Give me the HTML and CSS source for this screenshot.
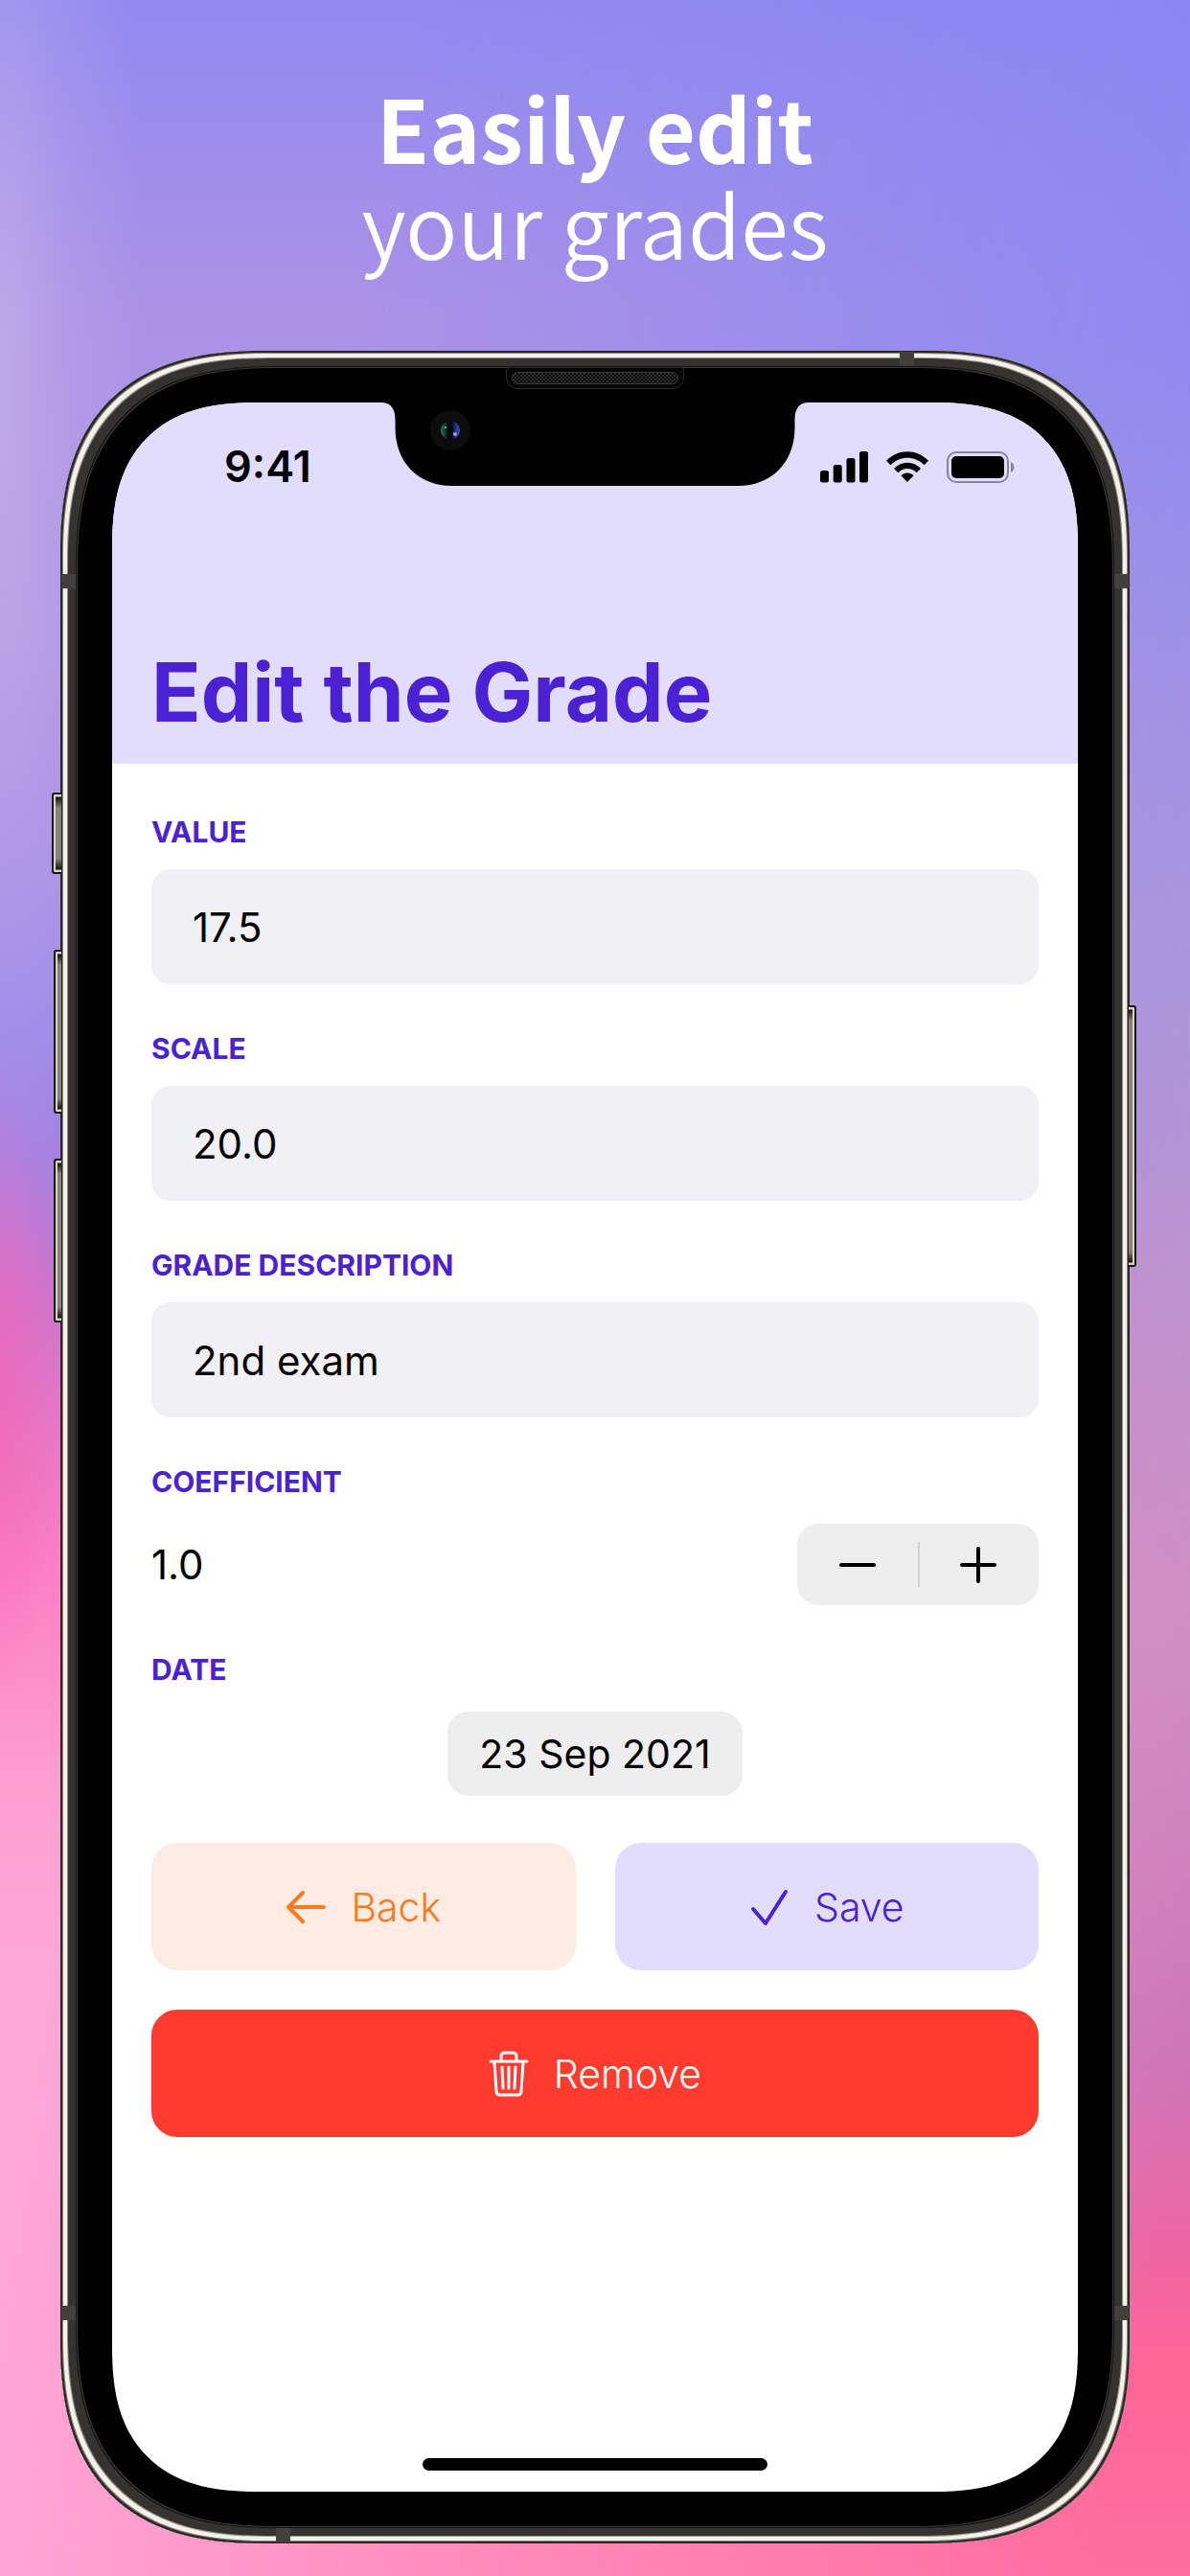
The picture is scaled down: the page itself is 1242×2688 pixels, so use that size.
FILE: index.html
```html
<!DOCTYPE html>
<html lang="en">
<head>
<meta charset="utf-8">
<meta name="viewport" content="width=device-width, initial-scale=1">
<title>Easily edit your grades</title>
<link rel="stylesheet" href="styles.css">
</head>
<body>
<main class="poster">
  <h1 class="headline"><strong>Easily edit</strong><br>your grades</h1>

  <div class="phone">
    <span class="key key-mute"></span>
    <span class="key key-up"></span>
    <span class="key key-down"></span>
    <span class="key key-power"></span>
    <span class="band band-top"></span>
    <span class="band band-bottom"></span>
    <span class="band band-side band-left band-high"></span>
    <span class="band band-side band-right band-high"></span>
    <span class="band band-side band-left band-low"></span>
    <span class="band band-side band-right band-low"></span>
    <span class="speaker"><span class="grille"></span></span>

    <div class="screen">
      <svg class="notch" viewBox="0 0 442 88" width="442" height="88" aria-hidden="true">
        <defs>
          <linearGradient id="lens" x1="0" x2="1" y1="0" y2="0">
            <stop offset="0" stop-color="#2c7a6c"/>
            <stop offset=".35" stop-color="#06100f"/>
            <stop offset=".55" stop-color="#020208"/>
            <stop offset=".8" stop-color="#1c3a9a"/>
            <stop offset="1" stop-color="#3c48b8"/>
          </linearGradient>
        </defs>
        <path d="M0 0C9 1 12.500 8 12.500 18V26C12.500 64 38 87 72 87H370C404 87 429.500 64 429.500 26V18C429.500 8 433 1 442 0Z" fill="#000"/>
        <circle cx="70" cy="29" r="21" fill="#0c0c0d"/>
        <circle cx="70" cy="29" r="10" fill="url(#lens)"/>
        <circle cx="75" cy="33" r="2" fill="#b08cc8"/>
        <circle cx="65" cy="26" r="1" fill="#7ad0d8"/>
      </svg>

      <header class="app-header">
        <div class="status">
          <span class="clock">9:41</span>
          <div class="status-icons">
            <svg width="50" height="33" viewBox="0 0 50 33" aria-hidden="true">
              <rect x="0" y="20" width="9" height="12.500" rx="2.500"/>
              <rect x="13.700" y="14" width="9" height="18.500" rx="2.500"/>
              <rect x="27.500" y="7" width="9" height="25.500" rx="2.500"/>
              <rect x="41" y="0" width="9" height="32.500" rx="2.500"/>
            </svg>
            <svg width="44" height="33" viewBox="0 0 44 33" aria-hidden="true">
              <path d="M0 9.800C12-3 32-3 44 9.800L39.600 14.200C30 4.200 14 4.200 4.400 14.200Z"/>
              <path d="M8 18C16 9.700 28 9.700 36 18L31.600 22.300C26 16.700 18 16.700 12.400 22.300Z"/>
              <path d="M15.400 25.300C19 21.700 25 21.700 28.600 25.300L22 32Z"/>
            </svg>
            <svg width="72" height="33" viewBox="0 0 72 33" aria-hidden="true">
              <rect x="1" y="1" width="63" height="31" rx="9" fill="none" stroke="#000" stroke-opacity=".4" stroke-width="2"/>
              <rect x="5" y="5" width="55" height="23" rx="5"/>
              <path d="M67 11C71.500 13 71.500 20 67 22Z" fill-opacity=".4"/>
            </svg>
          </div>
        </div>
        <h2 class="title">Edit the Grade</h2>
      </header>

      <form class="form">
        <div class="field">
          <label for="value">VALUE</label>
          <input id="value" type="text" inputmode="decimal" value="17.5">
        </div>
        <div class="field">
          <label for="scale">SCALE</label>
          <input id="scale" type="text" inputmode="decimal" value="20.0">
        </div>
        <div class="field">
          <label for="description">GRADE DESCRIPTION</label>
          <input id="description" type="text" value="2nd exam">
        </div>
        <div class="field field-loose">
          <label for="coefficient">COEFFICIENT</label>
          <div class="row">
            <output id="coefficient">1.0</output>
            <div class="stepper">
              <button type="button" aria-label="Decrease">
                <svg width="38" height="38" viewBox="0 0 38 38" aria-hidden="true"><path d="M2 19H36"/></svg>
              </button>
              <button type="button" aria-label="Increase">
                <svg width="38" height="38" viewBox="0 0 38 38" aria-hidden="true"><path d="M2 19H36M19 2V36"/></svg>
              </button>
            </div>
          </div>
        </div>
        <div class="field field-loose">
          <label for="date">DATE</label>
          <button class="date" id="date" type="button"><time datetime="2021-09-23">23 Sep 2021</time></button>
        </div>
        <div class="actions">
          <button class="action back" type="button">
            <svg width="42" height="48" viewBox="0 0 42 48" aria-hidden="true"><path d="M40 24H3M18 9L3 24L18 39"/></svg>
            Back
          </button>
          <button class="action save" type="submit">
            <svg width="42" height="48" viewBox="0 0 42 48" aria-hidden="true"><path d="M4 26L17 41L38 8"/></svg>
            Save
          </button>
          <button class="action remove" type="button">
            <svg width="42" height="48" viewBox="0 0 42 48" aria-hidden="true"><path d="M2 11H40M13 10V6Q13 2 17 2H25Q29 2 29 6V10M6 12L8 42Q8 46 12 46H30Q34 46 34 42L36 12M14 17L15 39M21 17V39M28 17L27 39"/></svg>
            Remove
          </button>
        </div>
      </form>
      <div class="home-bar"></div>
    </div>
  </div>
</main>
</body>
</html>
```
FILE: styles.css
```css
* { box-sizing: border-box; }

body {
  margin: 0;
  font-family: Inter, "Liberation Sans", sans-serif;
  color: #000;
}

button, input { font: inherit; color: inherit; border: 0; margin: 0; }
button { padding: 0; cursor: pointer; }

.poster {
  position: relative;
  isolation: isolate;
  min-height: 100vh;
  padding: 82px 63px 34px;
  background: linear-gradient(#8687f3 0%, #8887f3 13%, #9a90e8 25%, #ad99da 37%, #bd98cf 50%, #cd8fc5 63%, #ce75b8 80%, #f065a0 88%, #ff6698 92%, #ff6e9f 100%);
}

/* left-hand colours, fading out towards the right */
.poster::before,
.poster::after {
  content: "";
  position: absolute;
  inset: 0;
  z-index: -1;
}
.poster::before {
  background: linear-gradient(#9289f0 0%, #ab92e6 12%, #b095e4 25%, #a990e6 34%, #9c89ea 40%, #a57fe0 45%, #cd74cc 50%, #e878c4 56%, #fb80c4 61%, #fe9ed2 69%, #fda7d7 76%, #ffa8d8 100%);
  -webkit-mask-image: linear-gradient(100deg, #000 24%, rgba(0, 0, 0, .55) 54%, transparent 95%);
  mask-image: linear-gradient(100deg, #000 24%, rgba(0, 0, 0, .55) 54%, transparent 95%);
}
.poster::after {
  background: radial-gradient(ellipse 150px 1000px at 0 400px, rgba(200, 182, 234, .65), rgba(200, 182, 234, .2) 50%, transparent),
    radial-gradient(ellipse 60px 330px at 0 1450px, rgba(245, 100, 180, .6), transparent);
}

.headline {
  margin: 0 0 84px;
  font-family: "Noto Sans CJK SC", sans-serif;
  font-size: 90px;
  line-height: 100px;
  font-weight: 350;
  text-align: center;
  color: #fff;
}
.headline strong { font-weight: 700; }

.phone {
  position: relative;
  padding: 54px;
  border-radius: 176px;
  background: #000;
  box-shadow:
    inset 0 0 0 2px #2a2926,
    inset 0 0 0 3px #85837b,
    inset 0 0 0 7px #f5f0e9,
    inset 0 0 0 8px #96948a,
    inset 0 0 0 16px #34332f,
    inset 0 0 0 17px #121212,
    inset 0 0 0 18px #3a3a3c;
}
.screen {
  position: relative;
  overflow: hidden;
  padding-bottom: 22px;
  border-radius: 122px;
  background: #fff;
}
@supports (corner-shape: superellipse(1.33)) {
  .phone { border-radius: 215px; corner-shape: superellipse(1.33); }
  .screen { border-radius: 152px; corner-shape: superellipse(1.33); }
}

/* hardware details laid over the frame */
.key {
  position: absolute;
  left: -7px;
  width: 8px;
  height: 171px;
  border: 2px solid #151512;
  border-right: 0;
  border-radius: 3px 0 0 3px;
  background: linear-gradient(90deg, #d8d4c8 2px, transparent 2px), linear-gradient(#d8d4c8 2px, #151512 3px, #85837b 14px, #85837b calc(100% - 14px), #151512 calc(100% - 3px), #d8d4c8 calc(100% - 2px));
}
.key-mute { left: -9px; top: 461px; width: 10px; height: 85px; }
.key-up { top: 625px; }
.key-down { top: 843px; }
.key-power { left: auto; right: -7px; top: 683px; height: 273px; transform: scaleX(-1); }

.band { position: absolute; width: 15px; height: 15px; background: #443f3c; }
.band-top { left: 876px; top: 1px; }
.band-bottom { left: 225px; bottom: 1px; }
.band-left { left: 1px; }
.band-right { right: 1px; }
.band-high { top: 233px; }
.band-low { bottom: 233px; }

.speaker {
  position: absolute;
  left: 50%;
  top: 17px;
  width: 186px;
  height: 23px;
  padding: 4px 5px;
  transform: translateX(-50%);
  border: 1px solid #2a2a2b;
  border-radius: 3px 3px 12px 12px;
  background: #050505;
}
.grille {
  display: block;
  height: 13px;
  border: 1px solid #3a3a3a;
  border-radius: 7px;
  background: repeating-conic-gradient(#2c2c2c 0 25%, #0a0a0a 0 50%) 0 0 / 4px 4px;
}
.notch { position: absolute; left: 50%; top: 0; transform: translateX(-50%); }

.app-header {
  padding: 37px 41px 24px;
  background: #e2ddfd;
}
.status {
  display: flex;
  align-items: center;
  justify-content: space-between;
  height: 60px;
  margin-bottom: 156px;
  padding: 0 24px 0 76px;
}
.clock { font-size: 45px; line-height: 60px; font-weight: 600; }
.status-icons { display: flex; gap: 19px; }

.title {
  margin: 0;
  font-size: 85px;
  line-height: 100px;
  font-weight: 700;
  color: #4a22d4;
}

.form {
  display: flex;
  flex-direction: column;
  gap: 49px;
  padding: 53px 41px 0;
}
.field { display: flex; flex-direction: column; gap: 21px; }
.field-loose { gap: 26px; }
.field label {
  font-size: 30px;
  line-height: 36px;
  font-weight: 700;
  color: #4a22d4;
}
.field input {
  width: 100%;
  height: 120px;
  padding: 0 43px;
  border-radius: 20px;
  background: #f1f0f5;
  font-size: 42px;
}
.row {
  display: flex;
  align-items: center;
  justify-content: space-between;
  font-size: 42px;
}
.stepper {
  display: flex;
  width: 252px;
  height: 85px;
  border-radius: 22px;
  background: #eeeeef;
}
.stepper button {
  position: relative;
  flex: 1;
  display: grid;
  place-items: center;
  background: none;
}
.stepper button + button::before {
  content: "";
  position: absolute;
  left: 0;
  top: 19px;
  bottom: 19px;
  width: 2px;
  background: #d3d3d5;
}
.stepper svg, .action svg {
  fill: none;
  stroke: currentColor;
  stroke-width: 4;
  stroke-linecap: round;
  stroke-linejoin: round;
}
.date {
  align-self: center;
  height: 88px;
  padding: 0 33px;
  border-radius: 22px;
  background: #eeeeef;
  font-size: 41px;
}

.actions {
  display: grid;
  grid-template-columns: 1fr 1fr;
  gap: 41px;
}
.action {
  display: flex;
  align-items: center;
  justify-content: center;
  gap: 26px;
  height: 133px;
  border-radius: 27px;
  font-size: 41px;
  font-weight: 300;
}
.action svg { stroke-width: 4; }
.action.remove svg { stroke-width: 3; }
.back { background: #feece3; color: #fc7a1e; }
.save { background: #e2ddfd; color: #4a22d4; }
.remove { grid-column: 1 / -1; background: #ff3b30; color: #fff; }

.home-bar {
  width: 360px;
  height: 13px;
  margin: 335px auto 0;
  border-radius: 7px;
  background: #000;
}
```
